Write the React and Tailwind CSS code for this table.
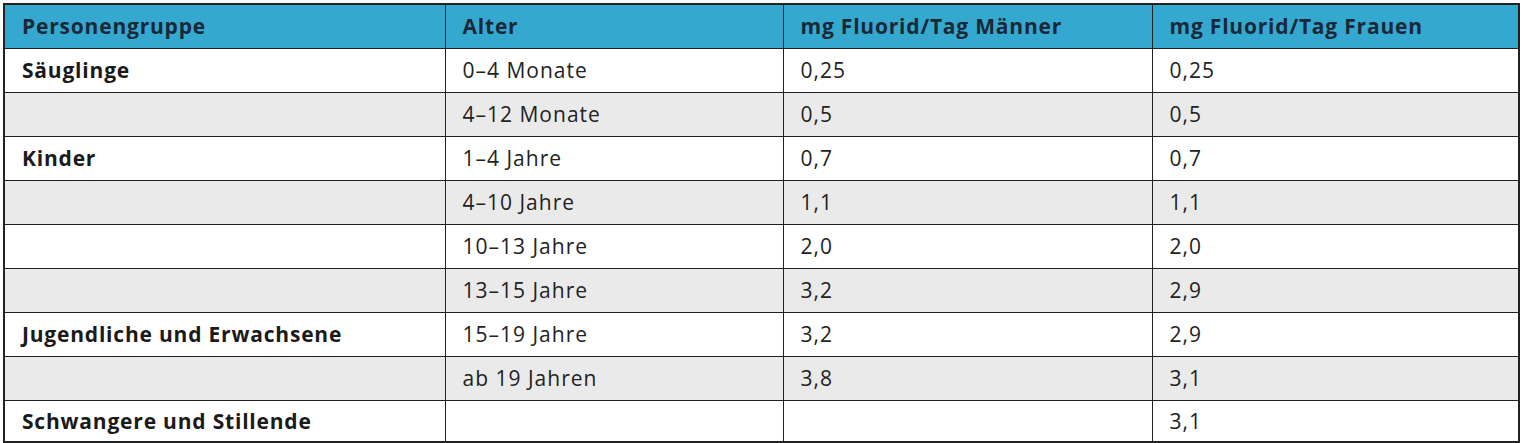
const rows = [
  { group: 'Säuglinge', age: '0–4 Monate', m: '0,25', f: '0,25' },
  { group: '', age: '4–12 Monate', m: '0,5', f: '0,5' },
  { group: 'Kinder', age: '1–4 Jahre', m: '0,7', f: '0,7' },
  { group: '', age: '4–10 Jahre', m: '1,1', f: '1,1' },
  { group: '', age: '10–13 Jahre', m: '2,0', f: '2,0' },
  { group: '', age: '13–15 Jahre', m: '3,2', f: '2,9' },
  { group: 'Jugendliche und Erwachsene', age: '15–19 Jahre', m: '3,2', f: '2,9' },
  { group: '', age: 'ab 19 Jahren', m: '3,8', f: '3,1' },
  { group: 'Schwangere und Stillende', age: '', m: '', f: '3,1' },
];

export default function App() {
  return (
    <div className="bg-white p-[3px] font-['Open_Sans',sans-serif]">
      <table className="w-[1517px] table-fixed border-collapse border-2 border-[#222] text-[21px]">
        <colgroup>
          <col className="w-[441px]" />
          <col className="w-[338px]" />
          <col className="w-[369px]" />
          <col />
        </colgroup>
        <thead>
          <tr className="h-[44px] bg-[#35a8cf] text-left text-[#1a2838]">
            <th className="border border-[#222] pl-[17px] pt-px font-bold tracking-[0.8px]">Personengruppe</th>
            <th className="border border-[#222] pl-[17px] pt-px font-bold tracking-[0.8px]">Alter</th>
            <th className="border border-[#222] pl-[17px] pt-px font-bold tracking-[0.8px]">mg Fluorid/Tag Männer</th>
            <th className="border border-[#222] pl-[17px] pt-px font-bold tracking-[0.8px]">mg Fluorid/Tag Frauen</th>
          </tr>
        </thead>
        <tbody className="text-[#222]">
          {rows.map((r, i) => (
            <tr
              key={i}
              className={`${i === rows.length - 1 ? 'h-[42px]' : 'h-[44px]'} ${i % 2 ? 'bg-[#ebeaeb]' : 'bg-white'}`}
            >
              <td className="border border-[#222] pl-[17px] pt-px font-bold tracking-[0.8px] text-[#1a1a1a]">{r.group}</td>
              <td className="border border-[#222] pl-[17px] pt-px tracking-[1px]">{r.age}</td>
              <td className="border border-[#222] pl-[17px] pt-px tracking-[1px]">{r.m}</td>
              <td className="border border-[#222] pl-[17px] pt-px tracking-[1px]">{r.f}</td>
            </tr>
          ))}
        </tbody>
      </table>
    </div>
  );
}
